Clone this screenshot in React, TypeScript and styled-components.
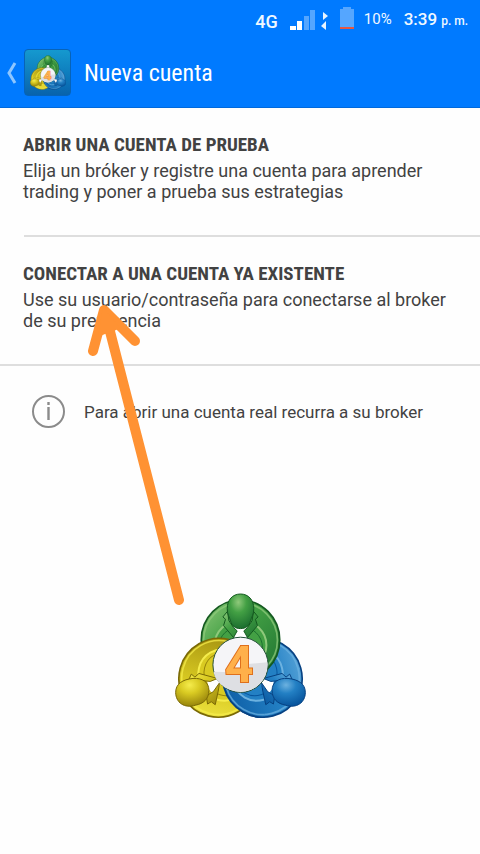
import React, { useId } from "react";
import styled, { createGlobalStyle } from "styled-components";

const GlobalStyle = createGlobalStyle`
  * { box-sizing: border-box; }
  body { margin: 0; background: #fff; font-family: Roboto, "Liberation Sans", sans-serif; }
`;

const Page = styled.div`
  position: relative;
  min-height: 100vh;
  background: #fefefe;
  color: #424242;
`;

const StatusBar = styled.div`
  display: flex;
  align-items: center;
  justify-content: flex-end;
  height: 38px;
  padding-right: 12px;
  background: #007aff;
  color: #f0f8ff;
`;

const Network = styled.span`
  padding-top: 5px;
  margin-right: 12px;
  font-size: 18px;
  font-weight: 500;
`;

const StatusIcons = styled.svg`
  width: 66px;
  height: 28px;
  margin-right: 8px;
`;

const Battery = styled.span`
  margin-right: 12px;
  font-size: 15px;
`;

const Clock = styled.time`
  font-size: 17px;
  font-weight: 500;
  small { margin-left: 4px; font-size: 12px; }
`;

const Header = styled.header`
  display: flex;
  align-items: center;
  height: 70px;
  padding-left: 4px;
  background: #007aff;
  border-bottom: 1px solid #0069dc;
`;

const BackButton = styled.button`
  display: flex;
  align-items: center;
  gap: 5px;
  padding: 0;
  border: 0;
  background: none;
  cursor: pointer;
`;

const AppTile = styled.span`
  display: flex;
  align-items: center;
  justify-content: center;
  width: 47px;
  height: 47px;
  border: 1px solid #0763b8;
  border-radius: 4px;
  background: linear-gradient(#1599cf, #0863ad);
`;

const Title = styled.h1`
  margin: 0 0 0 13px;
  color: #fff;
  font: 400 24px "Roboto Condensed", Roboto, sans-serif;
`;

const Options = styled.main`
  display: flex;
  flex-direction: column;
  align-items: stretch;
`;

const Option = styled.button<{ $inset?: boolean }>`
  display: flex;
  flex-direction: column;
  align-items: flex-start;
  justify-content: flex-start;
  width: 100%;
  min-height: 129px;
  padding: 25px 24px 34px 23px;
  border: 0;
  background: linear-gradient(#dedede, #dedede) no-repeat ${(p) => (p.$inset ? "24px" : "0")} 100% / 100% 2px;
  color: inherit;
  font-family: inherit;
  text-align: left;
  cursor: pointer;
`;

const OptionTitle = styled.strong`
  margin-bottom: 4px;
  font: 700 19px/23px "Roboto Condensed", Roboto, sans-serif;
`;

const OptionText = styled.span`
  font-size: 18px;
  line-height: 21px;
`;

const Note = styled.p`
  display: flex;
  align-items: center;
  gap: 18px;
  margin: 0;
  padding: 28px 24px 0 31px;
  font-size: 17px;
`;

const LogoArea = styled.div`
  display: flex;
  justify-content: center;
  padding-top: 163px;
`;

const Arrow = styled.svg`
  position: absolute;
  left: 80px;
  top: 296px;
  width: 110px;
  height: 320px;
  pointer-events: none;
`;

type Tone = { light: string; mid: string; dark: string; line: string };
const GREEN: Tone = { light: "#8fc97b", mid: "#43a044", dark: "#1d7030", line: "#14591f" };
const YELLOW: Tone = { light: "#f5ec4c", mid: "#d9ca22", dark: "#98850c", line: "#7a6905" };
const BLUE: Tone = { light: "#6db2e0", mid: "#2380c4", dark: "#08559d", line: "#064182" };

function Ring({ tone, fill, angle }: { tone: Tone; fill: string; angle: number }) {
  return (
    <g transform={`rotate(${angle} 227 240)`} stroke={tone.line}>
      <ellipse cx="227" cy="164" rx="118" ry="120" fill={fill} strokeWidth="5" />
      <ellipse cx="227" cy="165" rx="111" ry="112" fill="none" stroke={tone.light} strokeWidth="5" opacity=".75" />
      <ellipse cx="227" cy="180" rx="78" ry="74" fill={tone.mid} stroke={tone.light} strokeWidth="6" />
      <ellipse cx="227" cy="186" rx="66" ry="62" fill={tone.mid} stroke={tone.dark} strokeWidth="3" />
    </g>
  );
}

function SideCollar({ tone, fill, flip }: { tone: Tone; fill: string; flip?: boolean }) {
  return (
    <g transform={flip ? "matrix(-1 0 0 1 454 0)" : undefined} stroke={tone.line} strokeWidth="3" strokeLinejoin="round">
      <path fill="#fff" stroke="none" d="M126 281L160 280L166 295L148 332L130 310Z" />
      <path fill={fill} d="M66 296L79 267L90 276L102 265L158 280L136 289L108 286L96 302ZM164 293L160 318L151 359L139 350L128 357L124 332L145 320Z" />
    </g>
  );
}

function Logo({ size }: { size: number }) {
  const uid = useId().replace(/:/g, "");
  const tones: [string, Tone][] = [["g", GREEN], ["y", YELLOW], ["b", BLUE]];
  const ring = (name: string) => `url(#${uid}${name}r)`;
  const head = (name: string) => `url(#${uid}${name}h)`;
  return (
    <svg width={size} height={size} viewBox="30 22 394 390" role="img" aria-label="MetaTrader 4">
      <defs>
        {tones.map(([name, tone]) => (
          <React.Fragment key={name}>
            <linearGradient id={`${uid}${name}r`} x1="0" x2="1" y1="0" y2="1">
              <stop stopColor={tone.light} />
              <stop offset=".4" stopColor={tone.mid} />
              <stop offset="1" stopColor={tone.dark} />
            </linearGradient>
            <radialGradient id={`${uid}${name}h`} cx=".42" cy=".24" r=".75">
              <stop stopColor={tone.light} />
              <stop offset=".4" stopColor={tone.mid} />
              <stop offset="1" stopColor={tone.dark} />
            </radialGradient>
          </React.Fragment>
        ))}
        <clipPath id={`${uid}clip`}><path d="M150 290H300V412H150Z" /></clipPath>
      </defs>
      <Ring tone={BLUE} fill={ring("b")} angle={120} />
      <Ring tone={GREEN} fill={ring("g")} angle={0} />
      <Ring tone={YELLOW} fill={ring("y")} angle={-120} />
      <g clipPath={`url(#${uid}clip)`}><Ring tone={BLUE} fill={ring("b")} angle={120} /></g>
      <g stroke={GREEN.line} strokeWidth="3" strokeLinejoin="round">
        <path fill="#fff" stroke="none" d="M200 124H254L244 164H210Z" />
        <path fill={ring("g")} d="M188 78L174 95L182 102L176 121L206 157L217 137L206 127L192 106ZM266 78L280 95L272 102L278 121L248 157L237 137L248 127L262 106Z" />
        <path fill={head("g")} d="M227 26C251 26 267 44 267 70C267 88 260 96 257 107C253 122 243 130 227 130C211 130 201 122 197 107C194 96 187 88 187 70C187 44 203 26 227 26Z" />
      </g>
      <SideCollar tone={YELLOW} fill={ring("y")} />
      <SideCollar tone={BLUE} fill={ring("b")} flip />
      <path stroke={YELLOW.line} strokeWidth="3" fill={head("y")} d="M84 280C113 278 132 291 132 316C132 342 115 356 93 360C58 372 32 352 32 322C32 296 53 283 84 280Z" />
      <path stroke={BLUE.line} strokeWidth="3" fill={head("b")} d="M370 280C341 278 322 291 322 316C322 342 339 356 361 360C396 372 422 352 422 322C422 296 401 283 370 280Z" />
      <circle cx="227" cy="239" r="83" fill="#f5f5f8" stroke="#244e38" strokeWidth="3" />
      <path d="M146 260L227 262V239L308 231C310 282 274 320 227 320C187 320 151 293 146 260Z" fill="#dedfe3" />
      <text x="223" y="290" textAnchor="middle" fontFamily="Roboto, sans-serif" fontWeight="700" fontSize="150" fill="#ffb04a" stroke="#df6f1c" strokeWidth="6" paintOrder="stroke">4</text>
    </svg>
  );
}

export default function App() {
  return (
    <>
      <GlobalStyle />
      <Page>
        <StatusBar>
          <Network>4G</Network>
          <StatusIcons viewBox="0 0 66 28" aria-hidden="true">
            <path fill="#fff" d="M0 21h6v4H0zM7 16h5v9H7z" />
            <path fill="#55a6ff" d="M14 11h5v14h-5zM20 5h5v20h-5z" />
            <path fill="#e8f4ff" d="M33 7l5 4-5 4zM36 16v9l-5-4z" />
            <path fill="#55a6ff" d="M50 4h3V2h8v2h3v18H50z" />
            <path fill="#e65743" d="M50 22h14v2H50z" />
          </StatusIcons>
          <Battery>10%</Battery>
          <Clock dateTime="15:39">3:39<small>p. m.</small></Clock>
        </StatusBar>
        <Header>
          <BackButton aria-label="Atrás">
            <svg width="15" height="24" viewBox="0 0 15 24" fill="none" stroke="#8dc6ff" strokeWidth="3">
              <path d="M11 2L5 12L11 22" />
            </svg>
            <AppTile><Logo size={36} /></AppTile>
          </BackButton>
          <Title>Nueva cuenta</Title>
        </Header>
        <Options>
          <Option $inset>
            <OptionTitle>ABRIR UNA CUENTA DE PRUEBA</OptionTitle>
            <OptionText>Elija un bróker y registre una cuenta para aprender trading y poner a prueba sus estrategias</OptionText>
          </Option>
          <Option>
            <OptionTitle>CONECTAR A UNA CUENTA YA EXISTENTE</OptionTitle>
            <OptionText>Use su usuario/contraseña para conectarse al broker de su preferencia</OptionText>
          </Option>
          <Note>
            <svg width="35" height="35" viewBox="0 0 35 35" fill="none" stroke="#8b8b8b" aria-hidden="true">
              <circle cx="17.5" cy="17.5" r="15.5" strokeWidth="2" />
              <path d="M17.5 8v3M17.5 13v13" strokeWidth="2.4" />
            </svg>
            <span>Para abrir una cuenta real recurra a su broker</span>
          </Note>
          <LogoArea><Logo size={131} /></LogoArea>
        </Options>
        <Arrow viewBox="80 296 110 320" fill="none" stroke="#ff9233" strokeWidth="10" strokeLinecap="round" strokeLinejoin="round" aria-hidden="true">
          <path d="M93 351L104 310L135 341M105 312L179 600" />
          <path fill="#ff9233" stroke="none" d="M103 307L98 337L105 334L110 333L120 328Z" />
        </Arrow>
      </Page>
    </>
  );
}
